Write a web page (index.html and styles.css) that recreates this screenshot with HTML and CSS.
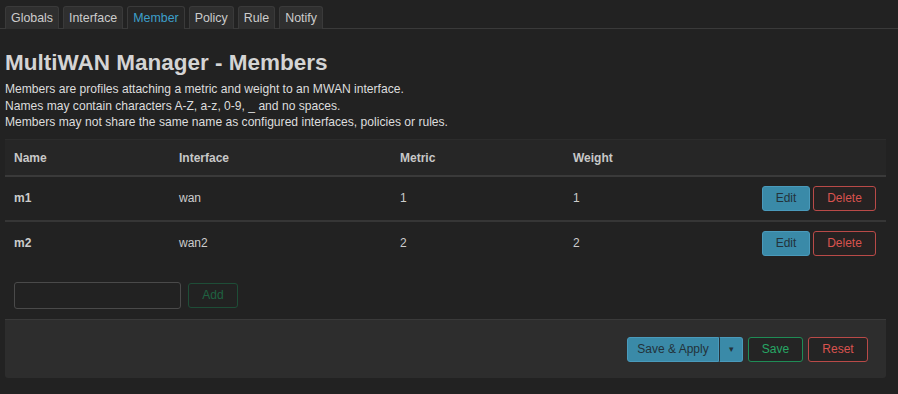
FILE: index.html
```html
<!DOCTYPE html>
<html lang="en">

<head>
  <meta charset="UTF-8">
  <title>MultiWAN Manager - Members</title>
  <link rel="stylesheet" href="styles.css">
</head>

<body>
  <ul class="tabs">
    <li><a href="#">Globals</a></li>
    <li><a href="#">Interface</a></li>
    <li class="active"><a href="#">Member</a></li>
    <li><a href="#">Policy</a></li>
    <li><a href="#">Rule</a></li>
    <li><a href="#">Notify</a></li>
  </ul>

  <h2 class="title">MultiWAN Manager - Members</h2>
  <div class="descr">
    Members are profiles attaching a metric and weight to an MWAN interface.<br>
    Names may contain characters A-Z, a-z, 0-9, _ and no spaces.<br>
    Members may not share the same name as configured interfaces, policies or rules.
  </div>

  <div class="table">
    <div class="tr head">
      <div class="th">Name</div>
      <div class="th">Interface</div>
      <div class="th">Metric</div>
      <div class="th">Weight</div>
      <div class="th"></div>
    </div>
    <div class="tr">
      <div class="td name">m1</div>
      <div class="td">wan</div>
      <div class="td">1</div>
      <div class="td">1</div>
      <div class="td actions">
        <button class="btn edit">Edit</button>
        <button class="btn remove">Delete</button>
      </div>
    </div>
    <div class="tr">
      <div class="td name">m2</div>
      <div class="td">wan2</div>
      <div class="td">2</div>
      <div class="td">2</div>
      <div class="td actions">
        <button class="btn edit">Edit</button>
        <button class="btn remove">Delete</button>
      </div>
    </div>
  </div>

  <div class="add-row">
    <input type="text" class="add-input">
    <button class="btn add" disabled>Add</button>
  </div>

  <div class="page-actions">
    <div class="split">
      <button class="btn apply">Save &amp; Apply</button>
      <button class="btn apply caret">&#9662;</button>
    </div>
    <button class="btn save">Save</button>
    <button class="btn reset">Reset</button>
  </div>
</body>

</html>
```

FILE: styles.css
```css
body {
  margin: 0;
  padding: 6px 12px 0 5px;
  background-color: #222222;
  color: #cccccc;
  font-family: "Liberation Sans", Arial, sans-serif;
  font-size: 12px;
}

.tabs {
  display: flex;
  gap: 4px;
  list-style: none;
  margin: 0 -12px 0 -5px;
  padding: 0 0 0 5px;
  border-bottom: 1px solid #3a3a3a;
}

.tabs li {
  margin-bottom: -1px;
}

.tabs a {
  display: block;
  padding: 5px 5px 4px;
  line-height: 13px;
  font-size: 12.4px;
  background: #2f2f2f;
  border: 1px solid #3a3a3a;
  border-bottom: none;
  border-radius: 3px 3px 0 0;
  color: #cccccc;
  text-decoration: none;
}

.tabs .active a {
  color: #3d9fc9;
  background: #262626;
}

.title {
  margin: 22px 0 6px;
  font-size: 22.5px;
  line-height: 24px;
  color: #d4d4d4;
}

.descr {
  line-height: 16.5px;
  font-size: 12.1px;
  color: #dddddd;
  margin-bottom: 8px;
}

.table {
  width: 881px;
}

.tr {
  display: grid;
  grid-template-columns: 165px 221px 173px 180px 1fr;
  align-items: center;
  height: 43px;
  border-bottom: 2px solid #363636;
}

.tr:last-child {
  border-bottom: none;
}

.tr.head {
  height: 35px;
  background: #262626;
  border-top: 1px solid #2c2c2c;
  border-bottom: 2px solid #3a3a3a;
}

.th,
.td {
  padding-left: 9px;
}

.th {
  font-weight: bold;
  color: #c8c8c8;
  padding-top: 2px;
}

.td.name {
  font-weight: bold;
}

.actions {
  display: flex;
  justify-content: flex-end;
  gap: 3px;
  padding-right: 10px;
}

.btn {
  font-family: inherit;
  font-size: 12px;
  height: 25px;
  padding: 0 10px;
  border-radius: 3px;
  background: #242424;
  cursor: pointer;
}

.edit {
  width: 48px;
  padding: 0;
  background: #3a8aa8;
  border: 1px solid #4a9abb;
  color: #23323a;
}

.remove {
  width: 63px;
  padding: 0;
  border: 1px solid #b94a48;
  color: #d9534f;
  background: #262222;
}

.add-row {
  display: flex;
  gap: 7px;
  align-items: center;
  padding: 17px 0 10px 9px;
}

.add-input {
  width: 167px;
  height: 27px;
  box-sizing: border-box;
  background: #222222;
  border: 1px solid #4a4a4a;
  border-radius: 3px;
}

.add {
  width: 50px;
  border: 1px solid #1e4d37;
  color: #1f6241;
  background: #222222;
}

.page-actions {
  display: flex;
  justify-content: flex-end;
  align-items: center;
  gap: 5px;
  width: 881px;
  height: 59px;
  box-sizing: border-box;
  padding: 1px 18px 0 0;
  background: #2d2d2d;
  border-top: 1px solid #3a3a3a;
  border-radius: 0 0 3px 3px;
}

.split {
  display: flex;
}

.apply {
  width: 92px;
  background: #3a8aa8;
  border: 1px solid #4a9abb;
  color: #23323a;
  padding: 0;
  border-radius: 3px 0 0 3px;
}

.apply.caret {
  width: 24px;
  padding: 0;
  font-size: 9px;
  border-left: 1px solid #23323a;
  border-radius: 0 3px 3px 0;
}

.save {
  width: 55px;
  border: 1px solid #1f8c56;
  color: #27a664;
}

.reset {
  width: 60px;
  border: 1px solid #b94a48;
  color: #d9534f;
}
```
